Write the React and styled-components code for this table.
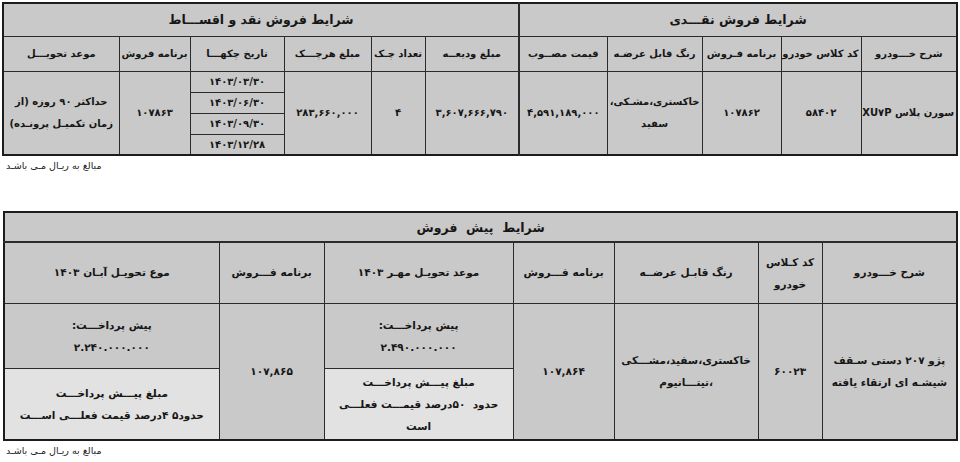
import React from "react";
import styled, { createGlobalStyle } from "styled-components";

const GlobalStyle = createGlobalStyle`
	body {
		margin: 0;
		background: #ffffff;
		font-family: "DejaVu Sans", "Noto Sans", sans-serif;
	}
`;

const Page = styled("div")`
	width: 960px;
	height: 462px;
	padding: 2px 0 0 2px;
	box-sizing: border-box;
	overflow: hidden;
`;

const Table = styled("table")`
	width: ${(p) => p.$width}px;
	border-collapse: collapse;
	table-layout: fixed;
	direction: rtl;
	background: #c9c9c9;
	border: 2px solid #1c1c1c;
	margin-left: ${(p) => p.$offset || 0}px;
	font-size: ${(p) => p.$size}px;
`;

const Row = styled("tr")`
	height: ${(p) => p.$h}px;
`;

const Cell = styled("td")`
	border: 1px solid #2b2b2b;
	border-bottom-width: ${(p) => (p.$thick ? 2 : 1)}px;
	border-left-width: ${(p) => (p.$split ? 2 : 1)}px;
	background: ${(p) => (p.$light ? "#e2e2e2" : "transparent")};
	text-align: center;
	vertical-align: middle;
	padding: 0 2px;
	font-size: ${(p) => (p.$title ? "12.5px" : "inherit")};
	font-weight: bold;
	line-height: ${(p) => (p.$loose ? 22 : 17)}px;
	color: #161616;
	white-space: ${(p) => (p.$nowrap ? "nowrap" : "normal")};
`;

const Note = styled("div")`
	direction: rtl;
	text-align: left;
	font-size: 9.5px;
	color: #222;
	padding: 4px 0 0 4px;
	height: ${(p) => p.$h}px;
	box-sizing: border-box;
`;

const Col = styled("col")`
	width: ${(p) => p.$w}px;
`;

const cashCols = [96, 80, 79, 95, 88, 94, 54, 87, 94, 71, 116];
const preCols = [135, 64, 144, 101, 189, 105, 215];

const dates = ["۱۴۰۳/۰۳/۳۰", "۱۴۰۳/۰۶/۳۰", "۱۴۰۳/۰۹/۳۰", "۱۴۰۳/۱۲/۲۸"];

const CashTable = () => (
	<Table $width={954} $size={10}>
		<colgroup>
			{cashCols.map((w, i) => (
				<Col key={i} $w={w} />
			))}
		</colgroup>
		<tbody>
			<Row $h={33}>
				<Cell colSpan={5} $title $split>شرایط فروش نقـــدی</Cell>
				<Cell colSpan={6} $title>شرایط فروش نقد و اقســـاط</Cell>
			</Row>
			<Row $h={35}>
				<Cell $nowrap>شرح خـــودرو</Cell>
				<Cell $nowrap>کد کلاس خودرو</Cell>
				<Cell $nowrap>برنامه فـروش</Cell>
				<Cell $nowrap>رنگ قابل عرضـه</Cell>
				<Cell $nowrap $split>قیمت مصــوب</Cell>
				<Cell $nowrap>مبلغ ودیعــه</Cell>
				<Cell $nowrap>تعداد چـک</Cell>
				<Cell $nowrap>مبلغ هرچـــک</Cell>
				<Cell $nowrap>تاریخ چکهـــا</Cell>
				<Cell $nowrap>برنامه فروش</Cell>
				<Cell $nowrap>موعد تحویـــل</Cell>
			</Row>
			<Row $h={21}>
				<Cell rowSpan={4} $nowrap>سورن پلاس XU۷P</Cell>
				<Cell rowSpan={4}>۵۸۴۰۲</Cell>
				<Cell rowSpan={4}>۱۰۷۸۶۲</Cell>
				<Cell rowSpan={4} $loose>خاکستری،مشـکی، سفید</Cell>
				<Cell rowSpan={4} $split>۴,۵۹۱,۱۸۹,۰۰۰</Cell>
				<Cell rowSpan={4}>۳,۶۰۷,۶۶۶,۷۹۰</Cell>
				<Cell rowSpan={4}>۴</Cell>
				<Cell rowSpan={4}>۲۸۳,۶۶۰,۰۰۰</Cell>
				<Cell>{dates[0]}</Cell>
				<Cell rowSpan={4}>۱۰۷۸۶۳</Cell>
				<Cell rowSpan={4} $loose>حداکثر ۹۰ روزه (از زمان تکمیـل پرونـده)</Cell>
			</Row>
			{dates.slice(1).map((d) => (
				<Row $h={21} key={d}>
					<Cell>{d}</Cell>
				</Row>
			))}
		</tbody>
	</Table>
);

const PresaleTable = () => (
	<Table $width={953} $offset={1} $size={10.5}>
		<colgroup>
			{preCols.map((w, i) => (
				<Col key={i} $w={w} />
			))}
		</colgroup>
		<tbody>
			<Row $h={30}>
				<Cell colSpan={7} $title $thick>شرایط&nbsp; پیش&nbsp; فروش</Cell>
			</Row>
			<Row $h={61}>
				<Cell $nowrap>شرح خـــودرو</Cell>
				<Cell $loose>کد کـلاس خودرو</Cell>
				<Cell $nowrap>رنگ قابـل عرضــه</Cell>
				<Cell $nowrap>برنامه فـــروش</Cell>
				<Cell $nowrap>موعد تحویـل مهـر ۱۴۰۳</Cell>
				<Cell $nowrap>برنامه فـــروش</Cell>
				<Cell $nowrap>موع تحویـل آبـان ۱۴۰۳</Cell>
			</Row>
			<Row $h={65}>
				<Cell rowSpan={2} $loose>پژو ۲۰۷ دستی سـقف شیشـه ای ارتقاء یافته</Cell>
				<Cell rowSpan={2}>۶۰۰۲۳</Cell>
				<Cell rowSpan={2} $loose>خاکستری،سفید،مشـــکی ،تیتـــانیوم</Cell>
				<Cell rowSpan={2}>۱۰۷,۸۶۴</Cell>
				<Cell $loose>
					پیش پرداخـــت:
					<br />
					۲.۴۹۰.۰۰۰.۰۰۰
				</Cell>
				<Cell rowSpan={2}>۱۰۷,۸۶۵</Cell>
				<Cell $loose>
					پیش پرداخـــت:
					<br />
					۲.۲۴۰.۰۰۰.۰۰۰
				</Cell>
			</Row>
			<Row $h={72}>
				<Cell $light $loose>
					مبلغ پیـــش پرداخـــت
					<br />
					حدود&nbsp; ۵۰درصد قیمـــت فعلـــی
					<br />
					است
				</Cell>
				<Cell $light $loose>
					مبلغ پیـــش پرداخـــت
					<br />
					حدود۵ ۴درصد قیمت فعلـــی اســـت
				</Cell>
			</Row>
		</tbody>
	</Table>
);

const App = () => (
	<>
		<GlobalStyle />
		<Page>
			<CashTable />
			<Note $h={55}>مبالغ به ریـال مـی باشـد</Note>
			<PresaleTable />
			<Note $h={20}>مبالغ به ریـال مـی باشـد</Note>
		</Page>
	</>
);

export default App;
